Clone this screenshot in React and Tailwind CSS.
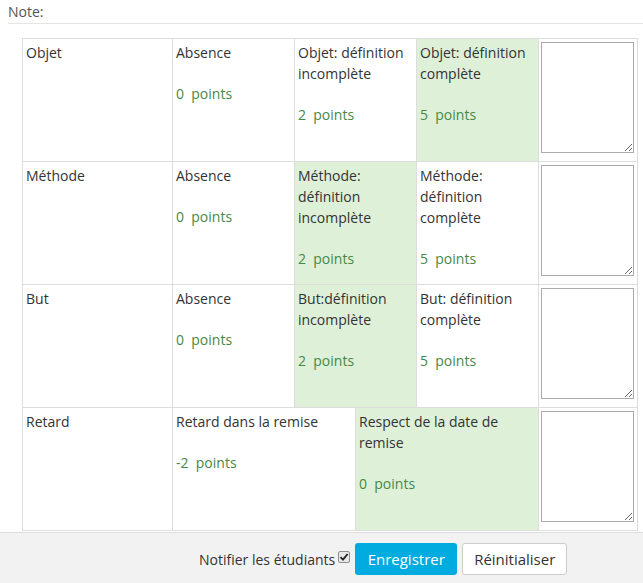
import React from 'react';

const criteria = [
  {
    name: 'Objet',
    levels: [
      { text: 'Absence', points: 0 },
      { text: 'Objet: définition incomplète', points: 2 },
      { text: 'Objet: définition complète', points: 5, selected: true },
    ],
  },
  {
    name: 'Méthode',
    levels: [
      { text: 'Absence', points: 0 },
      { text: 'Méthode: définition incomplète', points: 2, selected: true },
      { text: 'Méthode: définition complète', points: 5 },
    ],
  },
  {
    name: 'But',
    levels: [
      { text: 'Absence', points: 0 },
      { text: 'But:définition incomplète', points: 2, selected: true },
      { text: 'But: définition complète', points: 5 },
    ],
  },
  {
    name: 'Retard',
    levels: [
      { text: 'Retard dans la remise', points: -2 },
      { text: 'Respect de la date de remise', points: 0, selected: true },
    ],
  },
];

const Level = ({ level }) => (
  <div
    className={`flex-1 h-full border-r border-[#dddddd] last:border-r-0 px-[3px] pt-[3px] ${
      level.selected ? 'bg-[#dff0d8]' : 'bg-white'
    }`}
  >
    <div className="text-[#333333]">{level.text}</div>
    <div className="mt-[20px] text-[#468847]">
      {level.points}&nbsp;&nbsp;points
    </div>
  </div>
);

export default function App() {
  return (
    <div
      className="bg-white text-[14px] leading-[21px] min-h-[583px] flex flex-col"
      style={{ fontFamily: '"Open Sans", "Liberation Sans", sans-serif' }}
    >
      <div className="ml-[8px] mt-[1px] pb-[1px] border-b border-[#e5e5e5] text-[#555555]">
        Note:
      </div>

      <div className="ml-[22px] mt-[14px] w-[616px] border-l border-t border-[#dddddd]">
        {criteria.map((c) => (
          <div key={c.name} className="flex h-[123px] border-b border-[#dddddd]">
            <div className="w-[150px] border-r border-[#dddddd] px-[3px] pt-[3px] text-[#333333]">
              {c.name}
            </div>
            <div className="w-[366px] flex border-r border-[#dddddd]">
              {c.levels.map((l, i) => (
                <Level key={i} level={l} />
              ))}
            </div>
            <div className="w-[99px] border-r border-[#dddddd] pt-[3px] pl-[2px]">
              <textarea className="block w-[93px] h-[111px] border border-[#aaaaaa] bg-white" />
            </div>
          </div>
        ))}
      </div>

      <div className="mt-[1px] flex-1 border-t border-[#dddddd] bg-[#f2f2f2] pt-[10px] pb-[8px] pl-[199px] flex items-center">
        <span className="text-[#333333]">Notifier les étudiants</span>
        <label className="relative ml-[3px] -mt-[5px] w-[12px] h-[12px] block">
          <input
            type="checkbox"
            defaultChecked
            className="appearance-none block w-[12px] h-[12px] rounded-[2px] border border-[#8f8f8f] bg-[#e8e8e8]"
          />
          <svg
            viewBox="0 0 12 12"
            className="absolute left-0 top-0 w-[12px] h-[12px] pointer-events-none"
          >
            <path d="M2.5 6.2 L5 8.6 L9.6 3" fill="none" stroke="#222222" strokeWidth="1.8" />
          </svg>
        </label>
        <button className="ml-[5px] w-[102px] h-[32px] rounded-[3px] bg-[#00acdf] text-white text-[15px]">
          Enregistrer
        </button>
        <button className="ml-[5px] w-[105px] h-[32px] rounded-[3px] bg-white border border-[#cccccc] text-[#333333] text-[15px]">
          Réinitialiser
        </button>
      </div>
    </div>
  );
}
